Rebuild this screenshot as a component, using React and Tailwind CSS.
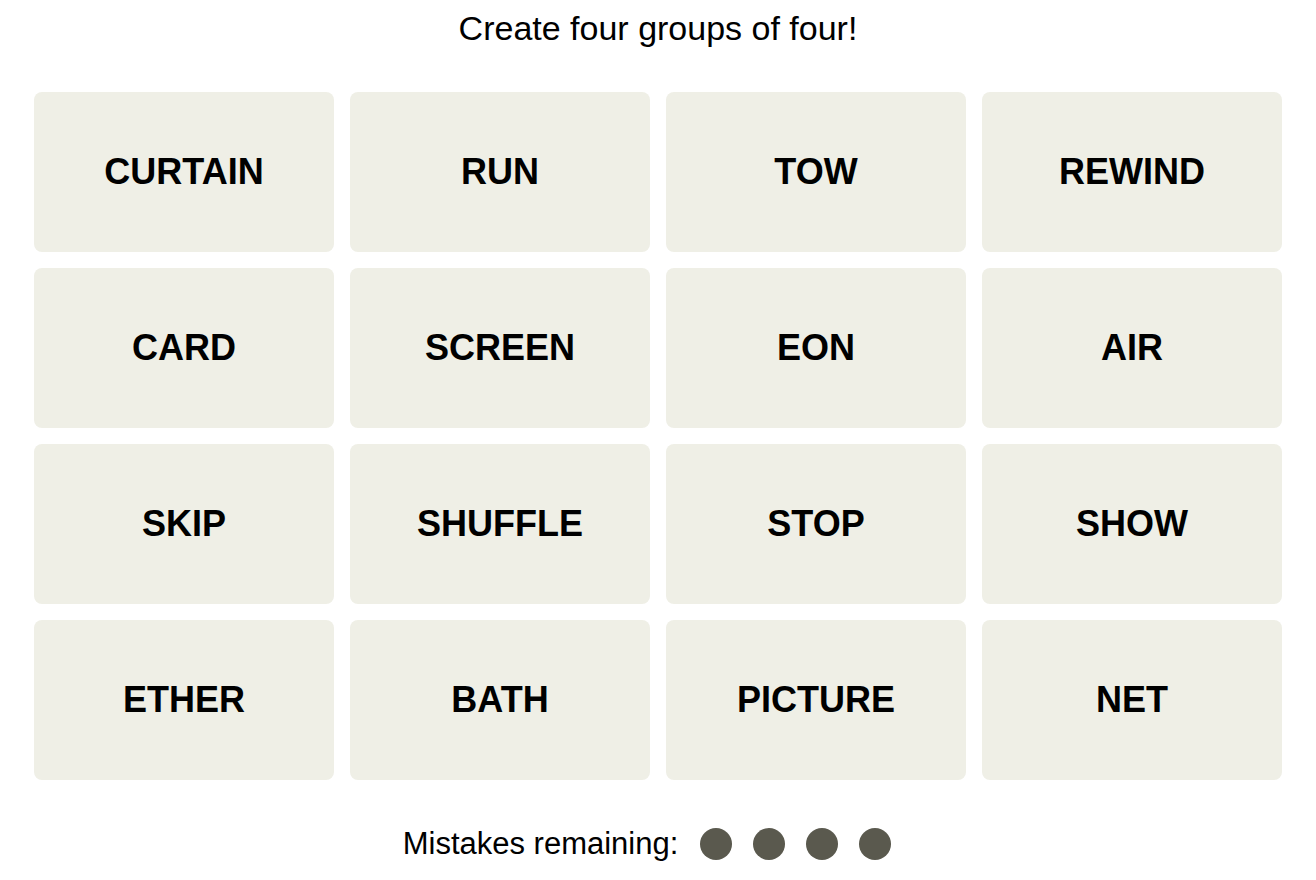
const words = [
  "CURTAIN", "RUN", "TOW", "REWIND",
  "CARD", "SCREEN", "EON", "AIR",
  "SKIP", "SHUFFLE", "STOP", "SHOW",
  "ETHER", "BATH", "PICTURE", "NET",
];

export default function App() {
  return (
    <div
      className="w-[1316px] h-[880px] bg-white text-black flex flex-col items-center"
      style={{ fontFamily: '"Liberation Sans", Arial, sans-serif' }}
    >
      <h1 className="h-[56px] flex items-center text-[34px] font-normal">
        Create four groups of four!
      </h1>

      <div className="mt-[36px] grid grid-cols-4 gap-4 w-[1248px]">
        {words.map((w) => (
          <button
            key={w}
            className="h-[160px] rounded-lg bg-[#efefe6] flex items-center justify-center text-[36px] font-bold"
          >
            {w}
          </button>
        ))}
      </div>

      <div className="mt-[48px] h-8 flex items-center pr-[22px]">
        <span className="text-[31px] mr-[22px]">Mistakes remaining:</span>
        <div className="flex gap-[21px]">
          <span className="w-8 h-8 rounded-full bg-[#5a594e]" />
          <span className="w-8 h-8 rounded-full bg-[#5a594e]" />
          <span className="w-8 h-8 rounded-full bg-[#5a594e]" />
          <span className="w-8 h-8 rounded-full bg-[#5a594e]" />
        </div>
      </div>
    </div>
  );
}
